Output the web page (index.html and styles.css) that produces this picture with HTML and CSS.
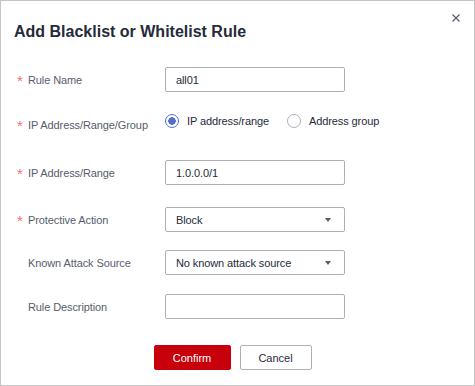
FILE: index.html
```html
<!DOCTYPE html>
<html lang="en">
<head>
    <meta charset="UTF-8">
    <title>Add Blacklist or Whitelist Rule</title>
    <link rel="stylesheet" href="styles.css">
</head>
<body>

<div class="dialog">
    <button class="close-btn" title="Close">
        <svg width="10" height="10" viewBox="0 0 10 10">
            <path d="M1.5 1.5 L8.5 8.5 M8.5 1.5 L1.5 8.5" stroke="#575d6c" stroke-width="1.2" fill="none"/>
        </svg>
    </button>

    <h2 class="dialog-title">Add Blacklist or Whitelist Rule</h2>

    <form class="rule-form">
        <div class="form-row row-name">
            <label class="form-label required">Rule Name</label>
            <div class="form-control">
                <input class="text-input" type="text" value="all01">
            </div>
        </div>

        <div class="form-row row-type">
            <label class="form-label required label-low">IP Address/Range/Group</label>
            <div class="form-control radio-group">
                <label class="radio checked"><span class="radio-dot"></span>IP address/range</label>
                <label class="radio"><span class="radio-dot"></span>Address group</label>
            </div>
        </div>

        <div class="form-row row-ip">
            <label class="form-label required">IP Address/Range</label>
            <div class="form-control">
                <input class="text-input" type="text" value="1.0.0.0/1">
            </div>
        </div>

        <div class="form-row row-action">
            <label class="form-label required">Protective Action</label>
            <div class="form-control">
                <div class="select">Block<span class="caret"></span></div>
            </div>
        </div>

        <div class="form-row row-source">
            <label class="form-label">Known Attack Source</label>
            <div class="form-control">
                <div class="select">No known attack source<span class="caret"></span></div>
            </div>
        </div>

        <div class="form-row row-desc">
            <label class="form-label">Rule Description</label>
            <div class="form-control">
                <input class="text-input" type="text" value="">
            </div>
        </div>
    </form>

    <div class="dialog-footer">
        <button class="btn btn-primary">Confirm</button>
        <button class="btn">Cancel</button>
    </div>
</div>

</body>
</html>
```

FILE: styles.css
```css
body {
    margin: 0;
    padding: 0;
    font-family: "Liberation Sans", Arial, sans-serif;
    background-color: #fff;
    color: #252b3a;
}

.dialog {
    position: relative;
    box-sizing: border-box;
    width: 475px;
    height: 386px;
    border: 1px solid #c4c4c4;
    background-color: #fff;
}

.close-btn {
    position: absolute;
    top: 9px;
    right: 12px;
    width: 12px;
    height: 12px;
    padding: 1px;
    border: none;
    background: none;
    cursor: pointer;
}

.dialog-title {
    margin: 0;
    padding: 21px 0 0 13px;
    font-size: 16px;
    line-height: 20px;
    font-weight: bold;
    color: #252b3a;
}

.rule-form {
    margin-top: 25px;
}

.form-row {
    display: flex;
    align-items: center;
    height: 25px;
}

.row-name { margin-bottom: 16px; }
.row-type { margin-bottom: 27px; }
.row-ip { margin-bottom: 22px; }
.row-action { margin-bottom: 18px; }
.row-source { margin-bottom: 19px; }

.form-label {
    position: relative;
    box-sizing: border-box;
    width: 164px;
    padding-left: 27px;
    font-size: 11px;
    letter-spacing: -0.1px;
    color: #575d6c;
}

.label-low {
    padding-top: 8px;
}

.form-label.required::before {
    content: "*";
    position: absolute;
    left: 16px;
    top: -2px;
    font-size: 15px;
    color: #f66f6a;
}

.label-low.required::before {
    top: 6px;
}

.form-control {
    width: 180px;
}

.text-input,
.select {
    box-sizing: border-box;
    width: 180px;
    height: 25px;
    padding: 0 10px;
    border: 1px solid #adb0b8;
    border-radius: 2px;
    font-family: inherit;
    font-size: 11px;
    letter-spacing: -0.1px;
    color: #252b3a;
    outline: none;
}

.select {
    position: relative;
    display: flex;
    align-items: center;
}

.caret {
    position: absolute;
    right: 13px;
    top: 10px;
    width: 0;
    height: 0;
    border-left: 3px solid transparent;
    border-right: 3px solid transparent;
    border-top: 4px solid #575d6c;
}

.radio-group {
    display: flex;
    width: auto;
}

.radio {
    display: flex;
    align-items: center;
    font-size: 11px;
    letter-spacing: -0.1px;
    color: #252b3a;
    margin-right: 18px;
}

.radio-dot {
    box-sizing: border-box;
    width: 14px;
    height: 14px;
    margin-right: 8px;
    border: 1px solid #adb0b8;
    border-radius: 50%;
    background-color: #fff;
}

.radio.checked .radio-dot {
    border-color: #526ecc;
    background: radial-gradient(circle, #526ecc 0, #526ecc 3.5px, #fff 4px);
}

.dialog-footer {
    display: flex;
    justify-content: center;
    gap: 9px;
    margin-top: 26px;
    padding-right: 10px;
}

.btn {
    box-sizing: border-box;
    min-width: 72px;
    height: 25px;
    padding: 0 14px;
    border: 1px solid #adb0b8;
    border-radius: 2px;
    background-color: #fff;
    font-family: inherit;
    font-size: 11px;
    color: #252b3a;
    cursor: pointer;
}

.btn-primary {
    min-width: 77px;
    border-color: #c7000b;
    background-color: #c7000b;
    color: #fff;
}
```
